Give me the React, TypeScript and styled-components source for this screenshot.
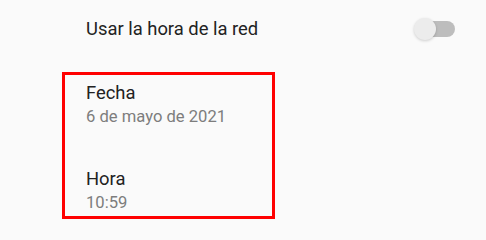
import React from "react";
import styled, { createGlobalStyle } from "styled-components";

const GlobalStyle = createGlobalStyle`
  html, body {
    margin: 0;
    padding: 0;
    background: #fafafa;
  }
  body {
    font-family: Roboto, "Noto Sans", sans-serif;
    -webkit-font-smoothing: antialiased;
  }
`;

interface PrefItem {
  title: string;
  summary: string;
}

const items: PrefItem[] = [
  { title: "Fecha", summary: "6 de mayo de 2021" },
  { title: "Hora", summary: "10:59" },
];

const App: React.FC = () => {
  return (
    <Screen>
      <GlobalStyle />
      <SwitchRow>
        <Title>Usar la hora de la red</Title>
        <Switch>
          <Track />
          <Thumb />
        </Switch>
      </SwitchRow>

      <Highlight>
        {items.map((item) => (
          <Item key={item.title}>
            <Title>{item.title}</Title>
            <Summary>{item.summary}</Summary>
          </Item>
        ))}
      </Highlight>
    </Screen>
  );
};

export default App;

const Screen = styled.div`
  width: 486px;
  height: 230px;
  background: #fafafa;
  overflow: hidden;
`;

const SwitchRow = styled.div`
  display: flex;
  align-items: center;
  justify-content: space-between;
  height: 58px;
  padding: 0 31px 0 86px;
`;

const Title = styled.div`
  color: #222222;
  font-size: 18.4px;
  line-height: 24px;
`;

const Summary = styled.div`
  color: #7d7d7d;
  font-size: 16.6px;
  line-height: 24px;
`;

const Switch = styled.div`
  position: relative;
  width: 41px;
  height: 22px;
  display: flex;
  align-items: center;
  justify-content: flex-end;
`;

const Track = styled.div`
  width: 36px;
  height: 16px;
  border-radius: 8px;
  background: #bdbdbd;
`;

const Thumb = styled.div`
  position: absolute;
  left: 0;
  top: 0;
  width: 22px;
  height: 22px;
  border-radius: 50%;
  background: #ececec;
  box-shadow: 0 1px 3px rgba(0, 0, 0, 0.18);
`;

const Highlight = styled.div`
  margin: 14px 0 0 62px;
  width: 213px;
  height: 147px;
  box-sizing: border-box;
  border: 3px solid #ff0000;
  padding: 6px 0 0 21px;
  display: flex;
  flex-direction: column;
  gap: 38px;
  overflow: hidden;
`;

const Item = styled.div`
  display: flex;
  flex-direction: column;
`;
